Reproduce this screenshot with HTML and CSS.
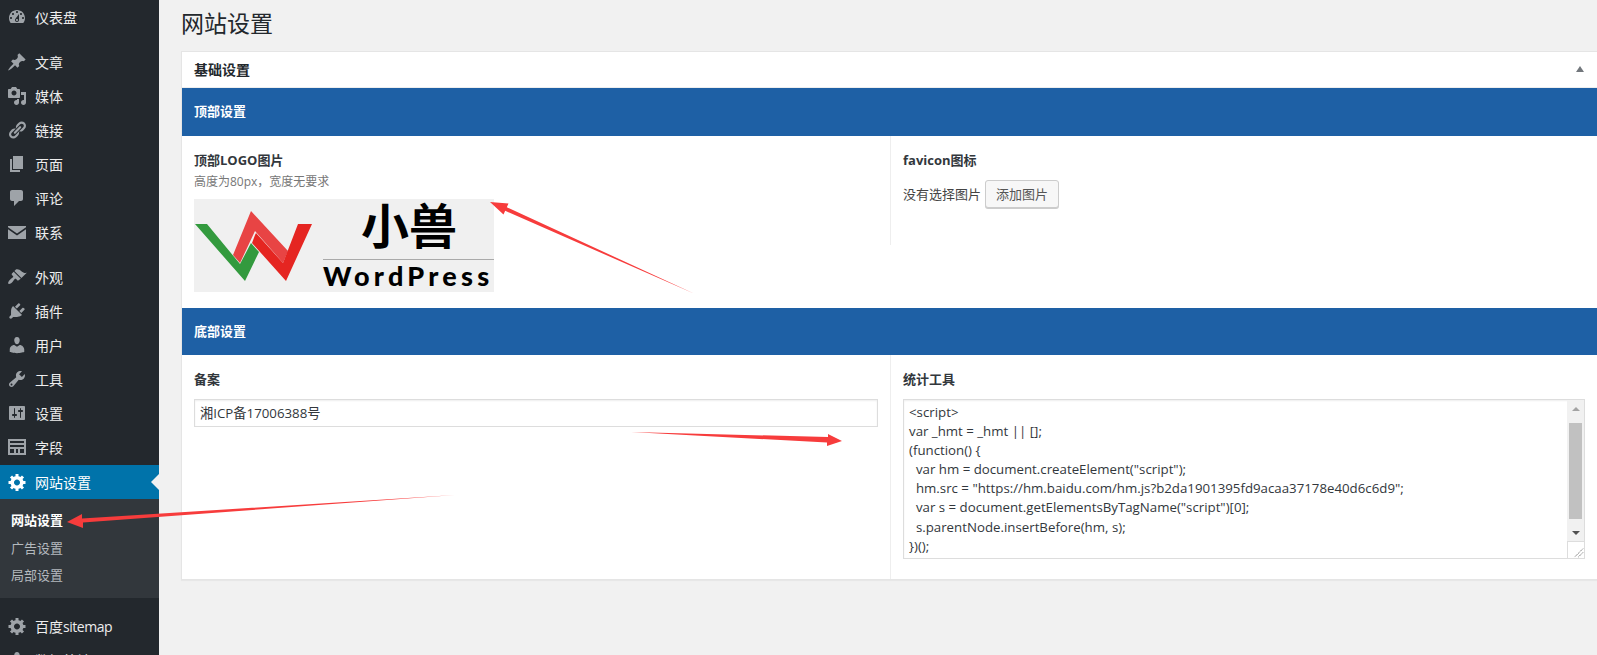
FILE: index.html
```html
<!DOCTYPE html>
<html lang="zh-CN">
<head>
<meta charset="utf-8">
<title>网站设置</title>
<link rel="stylesheet" href="styles.css">
</head>
<body>
<svg class="sprite" width="0" height="0" aria-hidden="true">
  <symbol id="i-dash" viewBox="0 0 20 20"><path fill-rule="evenodd" d="M3.76 16h12.48c1.1-1.37 1.76-3.11 1.76-5 0-4.42-3.58-8-8-8s-8 3.58-8 8c0 1.89.66 3.63 1.76 5zM10 4c.55 0 1 .45 1 1s-.45 1-1 1-1-.45-1-1 .45-1 1-1zM6 6c.55 0 1 .45 1 1s-.45 1-1 1-1-.45-1-1 .45-1 1-1zm8 0c.55 0 1 .45 1 1s-.45 1-1 1-1-.45-1-1 .45-1 1-1zm-5.37 5.55L12 7v6c0 1.1-.9 2-2 2s-2-.9-2-2c0-.57.24-1.08.63-1.45zM4 10c.55 0 1 .45 1 1s-.45 1-1 1-1-.45-1-1 .45-1 1-1zm12 0c.55 0 1 .45 1 1s-.45 1-1 1-1-.45-1-1 .45-1 1-1zm-5 3c0-.55-.45-1-1-1s-1 .45-1 1 .45 1 1 1 1-.45 1-1z"/></symbol>
  <symbol id="i-pin" viewBox="0 0 20 20"><path d="M10.44 3.02l1.82-1.82 6.36 6.35-1.83 1.82c-1.05-.68-2.48-.57-3.41.36l-.75.75c-.92.93-1.04 2.35-.35 3.41l-1.83 1.82-2.41-2.41-2.8 2.79c-.42.42-3.38 2.71-3.8 2.29s1.86-3.39 2.28-3.81l2.79-2.79L4.1 9.36l1.83-1.82c1.05.69 2.48.57 3.4-.36l.75-.75c.93-.92 1.05-2.35.36-3.41z"/></symbol>
  <symbol id="i-media" viewBox="0 0 20 20"><path fill-rule="evenodd" d="M13 11V4c0-.55-.45-1-1-1h-1.67L9 1H5L3.67 3H2c-.55 0-1 .45-1 1v7c0 .55.45 1 1 1h10c.55 0 1-.45 1-1zM7 4.5c1.38 0 2.5 1.12 2.5 2.5S8.38 9.5 7 9.5 4.5 8.38 4.5 7 5.62 4.5 7 4.5zM14 6h5v10.5c0 1.38-1.12 2.5-2.5 2.5S14 17.88 14 16.5s1.12-2.5 2.5-2.5c.17 0 .34.02.5.05V9h-3V6zm-4 8.05V13h2v3.5c0 1.38-1.12 2.5-2.5 2.5S7 17.88 7 16.5 8.12 14 9.5 14c.17 0 .34.02.5.05z"/></symbol>
  <symbol id="i-link" viewBox="0 0 20 20"><path d="M17.74 2.76c1.68 1.69 1.68 4.41 0 6.1l-1.53 1.52c-1.12 1.12-2.7 1.47-4.14 1.09l2.62-2.61.76-.77.76-.76c.84-.84.84-2.2 0-3.04-.84-.85-2.2-.85-3.04 0l-.77.76-3.38 3.38c-.37-1.44-.02-3.02 1.1-4.14l1.52-1.53c1.69-1.68 4.42-1.68 6.1 0zM8.59 13.43l5.34-5.34c.42-.42.42-1.1 0-1.52-.44-.43-1.13-.39-1.53 0l-5.33 5.34c-.42.42-.42 1.1 0 1.52.44.43 1.13.39 1.52 0zm-.76 2.29l4.14-4.15c.38 1.44.03 3.02-1.09 4.14l-1.52 1.53c-1.69 1.68-4.41 1.68-6.1 0-1.68-1.68-1.68-4.42 0-6.1l1.53-1.52c1.12-1.12 2.7-1.47 4.14-1.1l-4.14 4.15c-.85.84-.85 2.2 0 3.05.84.84 2.2.84 3.04 0z"/></symbol>
  <symbol id="i-page" viewBox="0 0 20 20"><path d="M6 15V2h10v13H6zm-1 1h8v2H3V5h2v11z"/></symbol>
  <symbol id="i-comment" viewBox="0 0 20 20"><path d="M5 2h9c1.1 0 2 .9 2 2v7c0 1.1-.9 2-2 2h-2l-5 5v-5H5c-1.1 0-2-.9-2-2V4c0-1.1.9-2 2-2z"/></symbol>
  <symbol id="i-mail" viewBox="0 0 20 20"><path d="M1 4h18v1.2l-9 6.3-9-6.3V4zm0 3.2l9 6.3 9-6.3V17H1V7.2z"/></symbol>
  <symbol id="i-brush" viewBox="0 0 20 20"><path d="M14.48 11.06L7.41 3.99l1.5-1.5c.5-.56 2.3-.47 3.51.32 1.21.8 1.43 1.28 2.91 2.1 1.18.64 2.45 1.26 4.45.85zm-.71.71L6.7 4.7 4.93 6.47c-.39.39-.39 1.02 0 1.41l1.06 1.06c.39.39.39 1.03 0 1.42-.6.6-1.43 1.11-2.21 1.69-.35.26-.7.53-1.01.84-1.35 1.34-2.1 3.07-1.36 3.81.74.74 2.47-.01 3.81-1.36.31-.31.58-.66.84-1.01.58-.78 1.09-1.61 1.69-2.21.39-.39 1.02-.39 1.41 0l1.06 1.06c.39.39 1.02.39 1.41 0z"/></symbol>
  <symbol id="i-plug" viewBox="0 0 20 20"><path d="M13.11 4.36L9.87 7.6 8 5.73l3.24-3.24c.35-.34 1.05-.2 1.56.32.52.51.66 1.21.31 1.55zm-8 1.77l.91-1.12 9.01 9.01-1.19.84c-.71.71-2.63 1.16-3.82 1.16H6.14L4.9 17.26c-.59.59-1.54.59-2.12 0-.59-.58-.59-1.53 0-2.12l1.24-1.24v-3.88c0-1.13.4-3.19 1.09-3.89zm7.26 3.97l3.24-3.24c.34-.35 1.04-.21 1.55.31.52.51.66 1.21.31 1.55l-3.24 3.25z"/></symbol>
  <symbol id="i-user" viewBox="0 0 20 20"><path d="M10 9.25c-2.27 0-2.73-3.44-2.73-3.44C7 4.02 7.82 2 9.97 2c2.16 0 2.98 2.02 2.71 3.81 0 0-.41 3.44-2.68 3.44zm0 2.57L12.72 10c2.39 0 4.52 2.33 4.52 4.53v2.49s-3.65 1.13-7.24 1.13c-3.65 0-7.24-1.13-7.24-1.13v-2.49c0-2.25 1.94-4.48 4.47-4.48z"/></symbol>
  <symbol id="i-tool" viewBox="0 0 20 20"><path fill-rule="evenodd" d="M16.68 9.77c-1.34 1.34-3.3 1.67-4.95.99l-5.41 6.52c-.99.99-2.59.99-3.58 0s-.99-2.59 0-3.57l6.52-5.42c-.68-1.65-.35-3.61.99-4.95 1.28-1.28 3.12-1.62 4.72-1.06l-2.89 2.89 2.82 2.82 2.86-2.87c.53 1.58.18 3.39-1.08 4.65zM3.81 16.21c.4.39 1.04.39 1.43 0 .4-.4.4-1.04 0-1.43-.39-.4-1.03-.4-1.43 0-.39.39-.39 1.03 0 1.43z"/></symbol>
  <symbol id="i-sliders" viewBox="0 0 20 20"><path fill-rule="evenodd" d="M18 16V4c0-.55-.45-1-1-1H3c-.55 0-1 .45-1 1v12c0 .55.45 1 1 1h14c.55 0 1-.45 1-1zM8 11h1c.55 0 1 .45 1 1s-.45 1-1 1H8v1.5c0 .28-.22.5-.5.5s-.5-.22-.5-.5V13H6c-.55 0-1-.45-1-1s.45-1 1-1h1V5.5c0-.28.22-.5.5-.5s.5.22.5.5V11zm5-2h-1c-.55 0-1-.45-1-1s.45-1 1-1h1V5.5c0-.28.22-.5.5-.5s.5.22.5.5V7h1c.55 0 1 .45 1 1s-.45 1-1 1h-1v5.5c0 .28-.22.5-.5.5s-.5-.22-.5-.5V9z"/></symbol>
  <symbol id="i-fields" viewBox="0 0 20 20"><path fill-rule="evenodd" d="M1 2h18v16H1V2zm2 2v2h14V4H3zm0 4v2h14V8H3zm0 4v4h4v-4H3zm6 0v4h2v-4H9zm4 0v4h4v-4h-4z"/></symbol>
  <symbol id="i-gear" viewBox="0 0 19 20"><path fill-rule="evenodd" d="M18 12h-2.18c-.17.7-.44 1.35-.81 1.93l1.54 1.54-2.1 2.1-1.54-1.54c-.58.36-1.23.63-1.91.79V19H8v-2.18c-.68-.16-1.33-.43-1.91-.79l-1.54 1.54-2.12-2.12 1.54-1.54c-.36-.58-.63-1.23-.79-1.91H1V9.03h2.17c.16-.7.44-1.35.8-1.94L2.43 5.55l2.1-2.1 1.54 1.54c.58-.37 1.24-.64 1.93-.81V2h3v2.18c.68.16 1.33.43 1.91.79l1.54-1.54 2.12 2.12-1.54 1.54c.36.59.64 1.24.8 1.94H18V12zm-8.5 1.5c1.66 0 3-1.34 3-3s-1.34-3-3-3-3 1.34-3 3 1.34 3 3 3z"/></symbol>
</svg>

<div class="page">
  <nav class="sidebar">
    <a class="item first"><svg class="icon"><use href="#i-dash"/></svg><span>仪表盘</span></a>
    <a class="item gap"><svg class="icon"><use href="#i-pin"/></svg><span>文章</span></a>
    <a class="item"><svg class="icon"><use href="#i-media"/></svg><span>媒体</span></a>
    <a class="item"><svg class="icon"><use href="#i-link"/></svg><span>链接</span></a>
    <a class="item"><svg class="icon"><use href="#i-page"/></svg><span>页面</span></a>
    <a class="item"><svg class="icon"><use href="#i-comment"/></svg><span>评论</span></a>
    <a class="item"><svg class="icon"><use href="#i-mail"/></svg><span>联系</span></a>
    <a class="item gap-lg"><svg class="icon"><use href="#i-brush"/></svg><span>外观</span></a>
    <a class="item"><svg class="icon"><use href="#i-plug"/></svg><span>插件</span></a>
    <a class="item"><svg class="icon"><use href="#i-user"/></svg><span>用户</span></a>
    <a class="item"><svg class="icon"><use href="#i-tool"/></svg><span>工具</span></a>
    <a class="item"><svg class="icon"><use href="#i-sliders"/></svg><span>设置</span></a>
    <a class="item"><svg class="icon"><use href="#i-fields"/></svg><span>字段</span></a>
    <a class="item active"><svg class="icon"><use href="#i-gear"/></svg><span>网站设置</span></a>
    <div class="submenu">
      <a class="subitem current">网站设置</a>
      <a class="subitem">广告设置</a>
      <a class="subitem">局部设置</a>
    </div>
    <a class="item after-sub"><svg class="icon"><use href="#i-gear"/></svg><span>百度<b class="latin">sitemap</b></span></a>
    <a class="item"><svg class="icon"><use href="#i-user"/></svg><span>数据统计</span></a>
  </nav>

  <main class="main">
    <h1 class="title">网站设置</h1>
    <section class="box">
      <header class="box-head">
        <h2 class="box-title">基础设置</h2>
        <span class="toggle"></span>
      </header>

      <div class="band">顶部设置</div>
      <div class="row row-top">
        <div class="cell cell-left logo-cell">
          <div class="label">顶部LOGO图片</div>
          <div class="hint">高度为80px，宽度无要求</div>
          <svg class="logo" viewBox="0 0 300 93" width="300" height="93">
            <rect width="300" height="93" fill="#f0f0f0"/>
            <polygon fill="#e84444" points="39,56 57,12 94,52 89,64 61,32 46,64"/>
            <polygon fill="#339a3e" points="1,25 13,25 46,65 57,44 65,53 51,82"/>
            <polygon fill="#e52521" points="61,36 58,44 92,82 118,25 104,25 89,64 62,34"/>
            <text class="logo-cn" x="215" y="45" text-anchor="middle">小兽</text>
            <rect x="129" y="60" width="171" height="1" fill="#aaa"/>
            <text class="logo-en" x="129" y="87">WordPress</text>
          </svg>
        </div>
        <div class="cell cell-right favicon-cell">
          <div class="label">favicon图标</div>
          <div class="picker">
            <span class="picker-text">没有选择图片</span>
            <button class="btn" type="button">添加图片</button>
          </div>
        </div>
      </div>

      <div class="band">底部设置</div>
      <div class="row row-bottom">
        <div class="cell cell-left">
          <div class="label">备案</div>
          <div class="input">湘ICP备17006388号</div>
        </div>
        <div class="cell cell-right">
          <div class="label">统计工具</div>
          <div class="textarea">
            <pre class="code">&lt;script&gt;
var _hmt = _hmt || [];
(function() {
  var hm = document.createElement("script");
  hm.src = "https://hm.baidu.com/hm.js?b2da1901395fd9acaa37178e40d6c6d9";
  var s = document.getElementsByTagName("script")[0];
  s.parentNode.insertBefore(hm, s);
})();</pre>
            <div class="scrollbar">
              <div class="track">
                <span class="arrow-up"></span>
                <span class="thumb"></span>
                <span class="arrow-down"></span>
              </div>
              <svg class="resizer" viewBox="0 0 17 17" width="17" height="17">
                <path d="M16 7L7 16M16 11L11 16" stroke="#777" stroke-width="1" stroke-dasharray="1.4 .6" fill="none"/>
              </svg>
            </div>
          </div>
        </div>
      </div>
    </section>
  </main>
</div>

<svg class="arrows" width="1597" height="655" viewBox="0 0 1597 655" aria-hidden="true">
  <polygon points="695,294 506.8,207.2 508.5,203.5 490,202 503.5,214.5 505.2,210.8"/>
  <polygon points="631,432 828,437 828,434 842,441 827,446 827,442.5"/>
  <polygon points="455,495 82,518.5 82,514 67,522 83,528 83,522.5"/>
</svg>
</body>
</html>
```
FILE: styles.css
```css
* { box-sizing: border-box; }
html, body {
  margin: 0;
  height: 655px;
  overflow: hidden;
  background: #f1f1f1;
  font-family: "Open Sans", "Noto Sans CJK SC", sans-serif;
  font-size: 13px;
  color: #444;
}
.sprite { position: absolute; }
.page { display: flex; height: 655px; }

/* sidebar */
.sidebar {
  width: 159px;
  flex: none;
  background: #23282d;
  padding-top: 0;
  overflow: hidden;
}
.item {
  display: flex;
  align-items: center;
  height: 34px;
  padding-left: 7px;
  color: #eee;
  font-size: 14px;
  position: relative;
}
.item span { margin-left: 8px; }
.latin { font-weight: 400; letter-spacing: -.45px; }
.icon { width: 20px; height: 20px; fill: #9ea3a8; flex: none; }
.gap { margin-top: 11px; }
.gap-lg { margin-top: 11px; }
.after-sub { margin-top: 11px; }
.active { margin-top: 1px; background: #0073aa; color: #fff; }
.active .icon { fill: #fff; }
.active::after {
  content: "";
  position: absolute;
  right: 0;
  top: 9px;
  border: 8px solid transparent;
  border-right-color: #f1f1f1;
  border-left-width: 0;
}
.submenu {
  background: #32373c;
  height: 99px;
  padding-top: 8px;
}
.subitem {
  display: block;
  height: 27.5px;
  line-height: 27.5px;
  padding-left: 11px;
  font-size: 13px;
  color: #b4b9be;
}
.current { color: #fff; font-weight: 700; }

/* main */
.main { flex: 1; min-width: 0; padding-left: 22px; }
.title {
  margin: 0;
  height: 51px;
  line-height: 47px;
  font-size: 23px;
  font-weight: 400;
  color: #23282d;
}
.box {
  background: #fff;
  border: 1px solid #e5e5e5;
  border-right: 0;
  box-shadow: 0 1px 1px rgba(0, 0, 0, .04);
}
.box-head {
  display: flex;
  align-items: center;
  justify-content: space-between;
  height: 36px;
  padding: 0 13px 2px 12px;
  border-bottom: 1px solid #eee;
}
.box-title {
  margin: 0;
  font-size: 14px;
  font-weight: 600;
  color: #23282d;
}
.toggle {
  width: 0;
  height: 0;
  border: 4px solid transparent;
  border-top: 0;
  border-bottom: 6px solid #72777c;
}
.band {
  height: 47.5px;
  line-height: 47px;
  padding-left: 12px;
  background: #1e60a5;
  color: #fff;
  font-size: 13px;
  font-weight: 700;
}
.row { display: flex; align-items: flex-start; }
.cell { padding: 0 12px; }
.cell-left { width: 708px; flex: none; }
.cell-right { flex: 1; min-width: 0; border-left: 1px solid #eee; }
.row-top .cell { padding-top: 14px; }
.row-bottom { align-items: stretch; }
.row-bottom .cell { padding-top: 14px; padding-bottom: 20px; }
.logo-cell { padding-bottom: 16px; }
.favicon-cell { padding-bottom: 37px; }
.label {
  line-height: 20px;
  font-size: 13px;
  font-weight: 700;
  color: #32373c;
}
.hint { line-height: 20px; margin-top: 2px; font-size: 12px; color: #777; }
.logo { display: block; margin-top: 7px; overflow: visible; }
.logo-cn {
  font-family: "Noto Sans CJK SC", sans-serif;
  font-size: 48px;
  font-weight: 700;
  fill: #000;
}
.logo-en {
  font-family: "Lato", sans-serif;
  font-size: 27px;
  font-weight: 900;
  letter-spacing: 4.2px;
  fill: #000;
}
.picker { display: flex; align-items: center; margin-top: 10px; }
.picker-text { color: #444; margin-right: 4px; }
.btn {
  height: 28px;
  width: 74px;
  padding: 0;
  font: inherit;
  color: #555;
  background: #f7f7f7;
  border: 1px solid #ccc;
  border-radius: 3px;
  box-shadow: 0 1px 0 #ccc;
}
.input {
  margin-top: 10px;
  height: 28px;
  line-height: 26px;
  padding-left: 5px;
  color: #32373c;
  font-size: 13.27px;
  border: 1px solid #ddd;
  box-shadow: inset 0 1px 2px rgba(0, 0, 0, .07);
}
.textarea {
  margin-top: 10px;
  height: 160px;
  display: flex;
  border: 1px solid #ddd;
  box-shadow: inset 0 1px 2px rgba(0, 0, 0, .07);
  overflow: hidden;
}
.code {
  flex: 1;
  min-width: 0;
  margin: 0;
  padding: 3px 5px;
  font-family: "Open Sans", "Noto Sans CJK SC", sans-serif;
  font-size: 13.27px;
  line-height: 19.1px;
  color: #32373c;
  white-space: pre-wrap;
}
.scrollbar { width: 17px; flex: none; display: flex; flex-direction: column; }
.track {
  flex: 1;
  background: #f1f1f1;
  display: flex;
  flex-direction: column;
  align-items: center;
  justify-content: space-between;
  padding: 7px 2px 6px;
}
.thumb { width: 13px; height: 96px; background: #c1c1c1; }
.arrow-up, .arrow-down { width: 0; height: 0; border: 4px solid transparent; }
.arrow-up { border-top: 0; border-bottom: 4px solid #a3a3a3; }
.arrow-down { border-bottom: 0; border-top: 4px solid #505050; }
.resizer { display: block; background: #fff; border-top: 1px solid #ddd; border-left: 1px solid #ddd; }

/* annotation arrows drawn over the screenshot */
.arrows { position: absolute; left: 0; top: 0; pointer-events: none; }
.arrows polygon { fill: #f73c3c; }
```
